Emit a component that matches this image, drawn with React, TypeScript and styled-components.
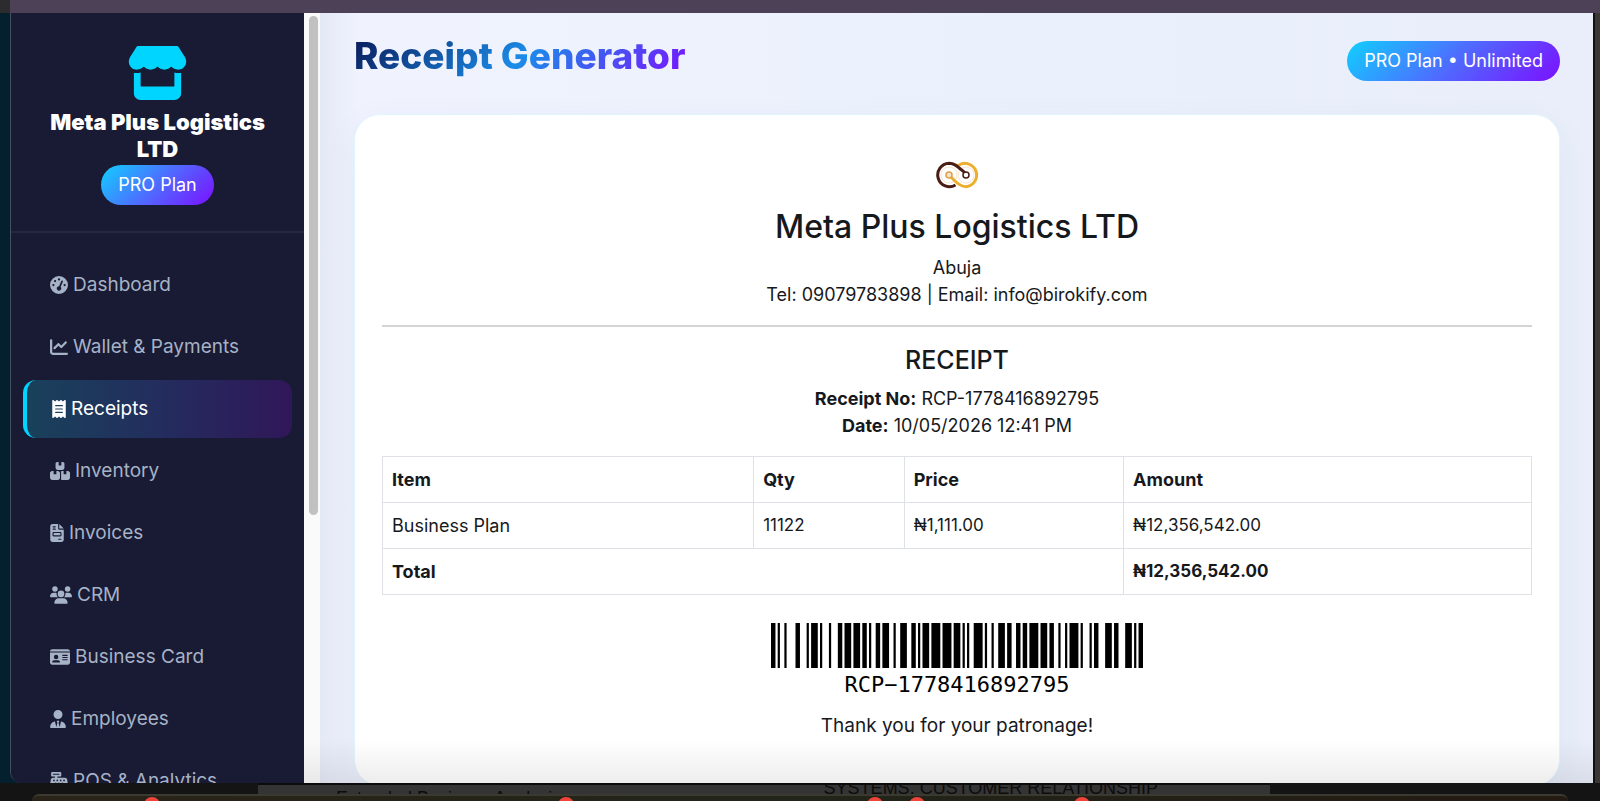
import React from "react";
import styled, { createGlobalStyle, css } from "styled-components";
import {
  FaStore,
  FaGaugeHigh,
  FaChartLine,
  FaReceipt,
  FaBoxesStacked,
  FaFileInvoice,
  FaUsers,
  FaIdCard,
  FaUserTie,
  FaCashRegister,
} from "react-icons/fa6";

const GlobalStyle = createGlobalStyle`
  *, *::before, *::after { box-sizing: border-box; }
  body {
    margin: 0;
    background: #141414;
    color: #16191c;
    font-family: Inter, "Open Sans", sans-serif;
    font-size: 18px;
    line-height: 26px;
  }
  h1, h2, h3, p { margin: 0; }
`;

const brandGradient = "linear-gradient(135deg, #10d0ff 0%, #4f6bff 50%, #7b10ff 100%)";

const Desktop = styled.div`
  height: 100vh;
  display: flex;
  flex-direction: column;
  overflow: hidden;
`;

const TitleStrip = styled.div`
  flex: 0 0 13px;
  background: #4c4156;
  border-left: 10px solid #2c2b2d;
`;

const WindowRow = styled.div`
  flex: 1;
  min-height: 0;
  display: flex;
  background: #04202e;
  padding-left: 10px;
`;

const AppWindow = styled.div`
  position: relative;
  flex: 1;
  min-width: 0;
  display: flex;
  overflow: hidden;
  border-left: 1px solid #44505c;
  border-bottom-left-radius: 12px;
  background: #191a33;
`;

const WindowShade = styled.div`
  position: absolute;
  left: 293px;
  right: 0;
  bottom: 0;
  height: 44px;
  background: linear-gradient(rgba(0, 0, 0, 0), rgba(0, 0, 0, 0.07));
  pointer-events: none;
`;

const EdgeStrip = styled.div`
  flex: 0 0 7px;
  background: #3a3834;
  border-left: 2px solid #111;
`;

const Sidebar = styled.aside`
  flex: 0 0 293px;
  background: #191a33;
  color: #a6b2c6;
`;

const Brand = styled.div`
  display: flex;
  flex-direction: column;
  align-items: center;
  padding: 33px 32px 26px;
  border-bottom: 2px solid #27283f;
  text-align: center;

  svg {
    width: 61px;
    height: 54px;
    color: #00d5ff;
  }
`;

const BrandName = styled.h2`
  margin: 9px 0 2px;
  color: #fff;
  font-size: 22px;
  font-weight: 900;
  line-height: 27px;
`;

const PlanPill = styled.span`
  display: inline-block;
  padding: 7px 17px;
  border-radius: 20px;
  background: ${brandGradient};
  color: #fff;
  white-space: nowrap;
`;

const Nav = styled.nav`
  display: flex;
  flex-direction: column;
  gap: 4px;
  padding: 23px 12px;
`;

const NavLink = styled.a<{ $active?: boolean }>`
  display: flex;
  align-items: center;
  gap: 5px;
  padding: 16px 27px;
  border-radius: 13px;
  color: inherit;
  font-size: 19px;
  text-decoration: none;
  white-space: nowrap;

  ${({ $active }) =>
    $active &&
    css`
      padding-left: 25px;
      border-left: 4px solid #00d5ff;
      background: linear-gradient(90deg, #19415b, #232d5e 50%, #301759);
      color: #fff;
    `}
`;

const NavIcon = styled.span<{ $width: number }>`
  display: flex;
  flex: 0 0 ${({ $width }) => $width}px;

  svg {
    width: 100%;
    height: 18px;
  }
`;

const ScrollTrack = styled.div`
  flex: 0 0 16px;
  padding: 3px 2px 0 5px;
  background: #fafafa;
`;

const ScrollThumb = styled.div`
  height: 65%;
  border-radius: 5px;
  background: #c1c1c1;
`;

const Main = styled.main`
  flex: 1;
  min-width: 0;
  padding: 28px 33px 0 34px;
  background: linear-gradient(90deg, #e4e9f6, #f0f3fe 40px, #ebf1fc 50%, #e9eefa);
`;

const PageHeader = styled.header`
  display: flex;
  justify-content: space-between;
  align-items: flex-start;
  height: 73px;
`;

const PageTitle = styled.h1`
  background: linear-gradient(135deg, #0a1d5c 0%, #1b8ce8 50%, #7b10ff 100%);
  background-clip: text;
  -webkit-background-clip: text;
  color: transparent;
  font-size: 37px;
  font-weight: 800;
  line-height: 30px;
  padding-bottom: 8px;
`;

const ReceiptCard = styled.section`
  padding: 32px 27px 46px;
  border: 1px solid #dff5fd;
  border-radius: 26px;
  background: #fff;
  box-shadow: 0 10px 36px rgba(40, 50, 110, 0.05);
  line-height: 27px;
  text-align: center;
`;

const Logo = styled.svg`
  display: block;
  width: 44px;
  height: 56px;
  margin: 0 auto 4px;
`;

const CompanyName = styled.h2`
  margin-bottom: 7px;
  font-size: 32px;
  font-weight: 500;
  line-height: 40px;
`;

const Rule = styled.hr`
  height: 2px;
  margin: 17px 0 16px;
  border: 0;
  background: #d3d4d5;
`;

const ReceiptHeading = styled.h3`
  margin-bottom: 8px;
  font-size: 25px;
  font-weight: 500;
  line-height: 34px;
`;

const ItemsTable = styled.table`
  width: 100%;
  margin: 17px 0 28px;
  border-collapse: collapse;
  table-layout: fixed;
  text-align: left;

  th, td {
    height: 46px;
    padding: 0 9px;
    border: 1px solid #dee2e6;
  }
`;

const Figure = styled.td`
  font-size: 17px;
`;

const BarcodeImage = styled.svg`
  display: block;
  width: 372px;
  height: 45px;
  margin: 0 auto 2px;
`;

const BarcodeText = styled.p`
  margin-bottom: 12px;
  color: #000;
  font-family: "DejaVu Sans Mono", monospace;
  font-size: 22px;
  line-height: 30px;
`;

const Thanks = styled.p`
  font-size: 19px;
`;

const Backdrop = styled.div`
  flex: 0 0 11px;
  display: flex;
  justify-content: space-between;
  margin-left: 258px;
  margin-right: 330px;
  padding: 0 112px 0 78px;
  overflow: hidden;
  background: #343434;
  border-top: 2px solid #0c0c0c;
  color: #0c0c0c;
`;

const BackdropText = styled.span<{ $low?: boolean }>`
  line-height: ${({ $low }) => ($low ? "26px" : "6px")};
  font-family: "Liberation Sans", sans-serif;
  white-space: nowrap;
`;

const Dock = styled.div`
  position: relative;
  flex: 0 0 7px;
  margin: 0 32px;
  overflow: hidden;
  border-top: 2px solid #3a3a30;
  border-radius: 8px 8px 0 0;
  background: linear-gradient(90deg, #2a2318, #22251a 50%, #241a12);
`;

const DockBadge = styled.span`
  position: absolute;
  top: 1px;
  width: 16px;
  height: 16px;
  border-radius: 50%;
  background: #f0443a;
`;

const navItems = [
  { label: "Dashboard", icon: FaGaugeHigh, width: 18 },
  { label: "Wallet & Payments", icon: FaChartLine, width: 18 },
  { label: "Receipts", icon: FaReceipt, width: 14, active: true },
  { label: "Inventory", icon: FaBoxesStacked, width: 20 },
  { label: "Invoices", icon: FaFileInvoice, width: 14 },
  { label: "CRM", icon: FaUsers, width: 22 },
  { label: "Business Card", icon: FaIdCard, width: 20 },
  { label: "Employees", icon: FaUserTie, width: 16 },
  { label: "POS & Analytics", icon: FaCashRegister, width: 18 },
];

// Code 128 bar and space widths, indexed by symbol value.
const patterns =
  "212222 222122 222221 121223 121322 131222 122213 122312 132212 221213 221312 231212 112232 122132 122231 113222 123122 123221 223211 221132 221231 213212 223112 312131 311222 321122 321221 312212 322112 322211 212123 212321 232121 111323 131123 131321 112313 132113 132311 211313 231113 231311 112133 112331 132131 113123 113321 133121 313121 211331 231131 213113 213311 213131 311123 311321 331121 312113 312311 332111 314111 221411 431111 111224 111422 121124 121421 141122 141221 112214 112412 122114 122411 142112 142211 241211 221114 413111 241112 134111 111242 121142 121241 114212 124112 124211 411212 421112 421211 212141 214121 412121 111143 111341 131141 114113 114311 411113 411311 113141 114131 311141 411131 211412 211214 211232 2331112".split(
    " "
  );

// Prefix in code set B; the trailing even run of digits packed in code set C.
function encode(value: string) {
  const digits = /\d+$/.exec(value)?.[0] ?? "";
  const packed = digits.slice(digits.length % 2);
  const prefix = value.slice(0, value.length - packed.length);
  const codes = [104, ...[...prefix].map((c) => c.charCodeAt(0) - 32), 99];
  for (let i = 0; i < packed.length; i += 2) codes.push(Number(packed.slice(i, i + 2)));
  const check = codes.reduce((sum, c, i) => sum + c * Math.max(i, 1), 0) % 103;
  return [...codes, check, 106];
}

function Barcode({ value }: { value: string }) {
  const bars: { x: number; w: number }[] = [];
  let x = 0;
  encode(value).forEach((code) =>
    [...patterns[code]].forEach((n, i) => {
      if (i % 2 === 0) bars.push({ x, w: Number(n) });
      x += Number(n);
    })
  );
  return (
    <BarcodeImage viewBox={`0 0 ${x} 45`} preserveAspectRatio="none" role="img" aria-label={value}>
      {bars.map((b) => (
        <rect key={b.x} x={b.x} y="0" width={b.w} height="45" fill="#000" />
      ))}
    </BarcodeImage>
  );
}

function InfinityLogo() {
  return (
    <Logo viewBox="0 0 44 56" fill="none" strokeWidth="3" aria-hidden="true">
      <circle cx="14" cy="28" r="8" stroke="#f7e6cf" strokeWidth="1" />
      <circle cx="31" cy="28" r="8" stroke="#f7e6cf" strokeWidth="1" />
      <path d="M23 18.600A11.700 11.700 0 1 1 31 39.700C25 39.700 21 35 15 29" stroke="#ecae2c" />
      <path d="M20.500 38A11.700 11.700 0 1 1 14 16.300C20 16.300 23 20 30 26" stroke="#4a1c14" />
      <circle cx="14" cy="28" r="3" stroke="#e0a04a" strokeWidth="1.5" fill="#f6e4cc" />
      <circle cx="31" cy="28" r="3" stroke="#4a1c14" strokeWidth="1.5" fill="#fff" />
    </Logo>
  );
}

export default function App() {
  return (
    <Desktop>
      <GlobalStyle />
      <TitleStrip />
      <WindowRow>
        <AppWindow>
          <Sidebar>
            <Brand>
              <FaStore />
              <BrandName>Meta Plus Logistics LTD</BrandName>
              <PlanPill>PRO Plan</PlanPill>
            </Brand>
            <Nav>
              {navItems.map(({ label, icon: Icon, width, active }) => (
                <NavLink key={label} href="#" $active={active}>
                  <NavIcon $width={width}>
                    <Icon />
                  </NavIcon>
                  {label}
                </NavLink>
              ))}
            </Nav>
          </Sidebar>
          <ScrollTrack>
            <ScrollThumb />
          </ScrollTrack>
          <Main>
            <PageHeader>
              <PageTitle>Receipt Generator</PageTitle>
              <PlanPill>PRO Plan • Unlimited</PlanPill>
            </PageHeader>
            <ReceiptCard>
              <InfinityLogo />
              <CompanyName>Meta Plus Logistics LTD</CompanyName>
              <p>Abuja</p>
              <p>Tel: 09079783898 | Email: info@birokify.com</p>
              <Rule />
              <ReceiptHeading>RECEIPT</ReceiptHeading>
              <p>
                <strong>Receipt No:</strong> RCP-1778416892795
              </p>
              <p>
                <strong>Date:</strong> 10/05/2026 12:41 PM
              </p>
              <ItemsTable>
                <colgroup>
                  <col width="32.3%" />
                  <col width="13.1%" />
                  <col width="19.1%" />
                  <col width="35.5%" />
                </colgroup>
                <thead>
                  <tr>
                    <th scope="col">Item</th>
                    <th scope="col">Qty</th>
                    <th scope="col">Price</th>
                    <th scope="col">Amount</th>
                  </tr>
                </thead>
                <tbody>
                  <tr>
                    <td>Business Plan</td>
                    <Figure>11122</Figure>
                    <Figure>₦1,111.00</Figure>
                    <Figure>₦12,356,542.00</Figure>
                  </tr>
                  <tr>
                    <th scope="row" colSpan={3}>Total</th>
                    <Figure>
                      <strong>₦12,356,542.00</strong>
                    </Figure>
                  </tr>
                </tbody>
              </ItemsTable>
              <Barcode value="RCP-1778416892795" />
              <BarcodeText>RCP−1778416892795</BarcodeText>
              <Thanks>Thank you for your patronage!</Thanks>
            </ReceiptCard>
          </Main>
          <WindowShade />
        </AppWindow>
        <EdgeStrip />
      </WindowRow>
      <Backdrop>
        <BackdropText $low>Extended Business Analysis</BackdropText>
        <BackdropText>SYSTEMS, CUSTOMER RELATIONSHIP</BackdropText>
      </Backdrop>
      <Dock>
        {[112, 526, 835, 877, 1042].map((left) => (
          <DockBadge key={left} style={{ left }} />
        ))}
      </Dock>
    </Desktop>
  );
}
